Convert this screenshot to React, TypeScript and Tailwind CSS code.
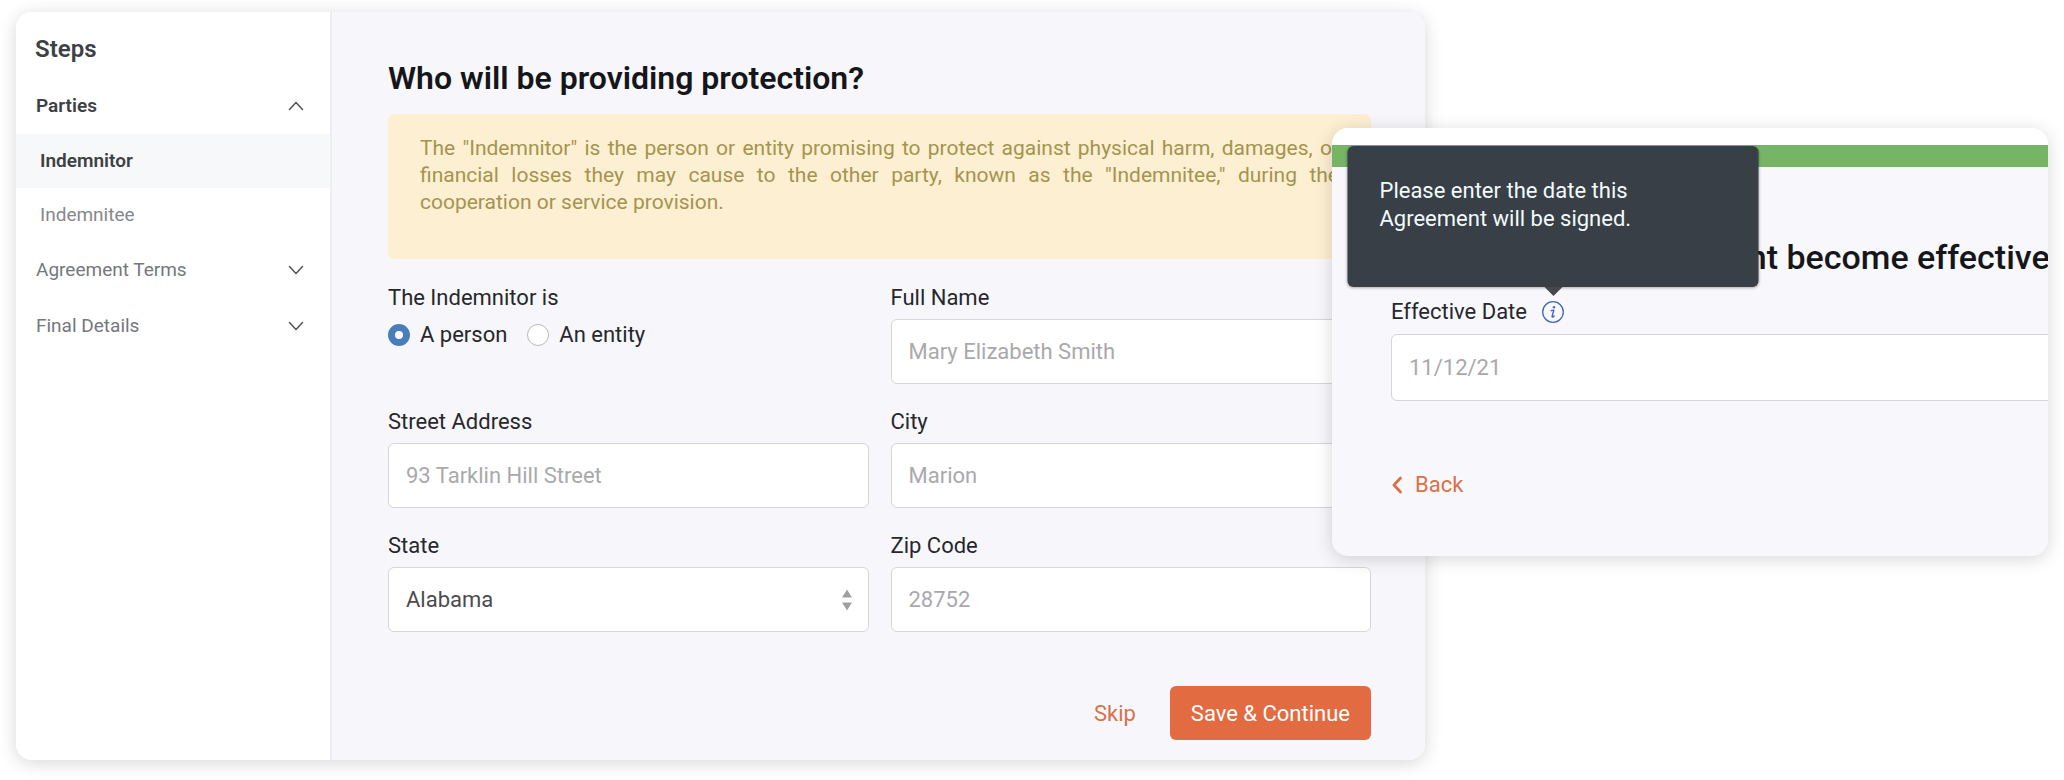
import React, { useState } from "react";

const card = "min-w-0 overflow-hidden rounded-2xl shadow-[0_3px_18px_rgba(0,0,0,0.16)]";
const labelText = "block text-[22px] leading-8 text-[#27272c]";
const control =
  "block w-full rounded-md border border-[#d5d5da] bg-white px-[17px] text-[22px] outline-none placeholder:text-[#a9a9ab] placeholder:opacity-100";

function Chevron({ up = false }: { up?: boolean }) {
  return (
    <svg
      viewBox="0 0 16 10"
      className="h-[10px] w-4"
      fill="none"
      stroke="#4a4e52"
      strokeWidth="1.4"
      strokeLinecap="round"
      strokeLinejoin="round"
      aria-hidden="true"
    >
      <path d={up ? "M1.5 8.5 8 1.5l6.5 7" : "M1.5 1.5 8 8.5l6.5-7"} />
    </svg>
  );
}

function Section({ title, open = false }: { title: string; open?: boolean }) {
  return (
    <button
      type="button"
      aria-expanded={open}
      className={
        open
          ? "flex h-14 w-full items-center justify-between pr-[26px] pl-5 text-left text-[19px] font-semibold text-[#3c4145]"
          : "flex h-14 w-full items-center justify-between pr-[26px] pl-5 text-left text-[19px] text-[#74787c]"
      }
    >
      {title}
      <Chevron up={open} />
    </button>
  );
}

function Sidebar() {
  return (
    <nav aria-label="Steps" className="w-[316px] shrink-0 border-r-2 border-[#eeeeef] bg-white pt-4">
      <h2 className="flex h-[42px] items-center pl-[19px] text-2xl font-semibold text-[#3c4145]">Steps</h2>
      <div className="pt-2">
        <Section title="Parties" open />
        <a
          href="#indemnitor"
          aria-current="step"
          className="flex h-[54px] items-center bg-[#f7f8f9] pl-6 text-[19px] font-semibold text-[#3c4145]"
        >
          Indemnitor
        </a>
        <a href="#indemnitee" className="flex h-[54px] items-center pl-6 text-[19px] text-[#85888b]">
          Indemnitee
        </a>
        <Section title="Agreement Terms" />
        <Section title="Final Details" />
      </div>
    </nav>
  );
}

function Field({ id, label, placeholder }: { id: string; label: string; placeholder: string }) {
  return (
    <div className="flex flex-col gap-[5px]">
      <label htmlFor={id} className={labelText}>
        {label}
      </label>
      <input id={id} type="text" placeholder={placeholder} className={control + " h-[65px]"} />
    </div>
  );
}

function Choice({ label, checked, onChange }: { label: string; checked: boolean; onChange: () => void }) {
  return (
    <label className="flex items-center gap-[10px] text-[22px] leading-8 text-[#27272c]">
      <input
        type="radio"
        name="party-type"
        checked={checked}
        onChange={onChange}
        className="size-[22px] appearance-none rounded-full border border-[#b9b9be] bg-white checked:border-[7px] checked:border-[#4a7ebb]"
      />
      {label}
    </label>
  );
}

function PartyForm() {
  const [kind, setKind] = useState("person");
  return (
    <main className="min-w-0 flex-1 bg-[#f7f7fb] pt-[46px] pr-[54px] pb-5 pl-14">
      <h1 className="text-[32px] leading-10 font-semibold text-[#15161a]">Who will be providing protection?</h1>
      <p className="mt-4 rounded-md bg-[#fdefd2] px-8 pt-[21px] pb-[43px] text-justify text-[21px] leading-[27px] text-[#a3954f]">
        The "Indemnitor" is the person or entity promising to protect against physical harm, damages, or financial
        losses they may cause to the other party, known as the "Indemnitee," during the cooperation or service
        provision.
      </p>
      <form onSubmit={(e) => e.preventDefault()}>
        <div className="mt-[23px] grid grid-cols-2 gap-[22px]">
          <fieldset>
            <legend className={labelText}>The Indemnitor is</legend>
            <div className="mt-[5px] flex gap-5">
              <Choice label="A person" checked={kind === "person"} onChange={() => setKind("person")} />
              <Choice label="An entity" checked={kind === "entity"} onChange={() => setKind("entity")} />
            </div>
          </fieldset>
          <Field id="full-name" label="Full Name" placeholder="Mary Elizabeth Smith" />
          <Field id="street" label="Street Address" placeholder="93 Tarklin Hill Street" />
          <Field id="city" label="City" placeholder="Marion" />
          <div className="flex flex-col gap-[5px]">
            <label htmlFor="state" className={labelText}>
              State
            </label>
            <div className="relative">
              <select
                id="state"
                defaultValue="Alabama"
                className={control + " h-[65px] appearance-none text-[#4b4b4e]"}
              >
                <option>Alabama</option>
                <option>Alaska</option>
                <option>Arizona</option>
              </select>
              <svg
                viewBox="0 0 10 21"
                className="pointer-events-none absolute top-1/2 right-[17px] h-[21px] w-[10px] -translate-y-1/2"
                fill="#a0a0a0"
                aria-hidden="true"
              >
                <path d="M5 0l5 8H0zM5 21l5-8H0z" />
              </svg>
            </div>
          </div>
          <Field id="zip" label="Zip Code" placeholder="28752" />
        </div>
        <div className="mt-[54px] flex items-center justify-end gap-[34px]">
          <button type="button" className="text-[22px] text-[#d9714a]">
            Skip
          </button>
          <button type="submit" className="h-[54px] rounded-md bg-[#e26b42] px-[21px] text-[22px] text-white">
            Save &amp; Continue
          </button>
        </div>
      </form>
    </main>
  );
}

function InfoIcon() {
  return (
    <svg viewBox="0 0 22 22" className="size-[22px]" fill="none" stroke="#4468b5" aria-hidden="true">
      <circle cx="11" cy="11" r="10.300" strokeWidth="1.300" />
      <circle cx="12" cy="6.300" r="1.200" fill="#4468b5" stroke="none" />
      <path
        d="M9.200 9.700c1-.5 1.900-.6 2.600-.5l-1.700 6c-.2.800.2 1 .7.800.6-.2 1-.6 1.400-1"
        strokeWidth="1.400"
        strokeLinecap="round"
        strokeLinejoin="round"
      />
    </svg>
  );
}

function DatePanel() {
  return (
    <section className={card + " mt-[116px] -ml-[93px] flex-[716] bg-[#f7f7fc]"}>
      <div className="h-[17px] bg-white" />
      <div className="h-[22px] bg-[#76b566]" />
      <div className="-mr-4 pt-[70px] pb-[55px] pl-[59px]">
        <h2 className="text-[34px] leading-10 font-medium whitespace-nowrap text-[#15161a]">
          When will this Agreement become effective?
        </h2>
        <div className="mt-[19px] flex items-center gap-[15px]">
          <label htmlFor="effective-date" className="text-[22px] leading-8 text-[#27272c]">
            Effective Date
          </label>
          <span className="relative flex">
            <button type="button" aria-label="About the effective date" aria-describedby="date-tip">
              <InfoIcon />
            </button>
            <span
              id="date-tip"
              role="tooltip"
              className="absolute bottom-full left-1/2 mb-[14px] w-[411px] -translate-x-1/2 rounded-md bg-[#383f47] pt-[31px] pr-24 pb-[54px] pl-8 text-[22px] leading-7 text-[#f3fafa] shadow-[0_1px_3px_rgba(0,0,0,0.3)]"
            >
              Please enter the date this Agreement will be signed.
              <svg
                viewBox="0 0 18 9"
                className="absolute top-full left-1/2 h-[9px] w-[18px] -translate-x-1/2"
                fill="#45494f"
                aria-hidden="true"
              >
                <path d="M0 0h18L9 9z" />
              </svg>
            </span>
          </span>
        </div>
        <input id="effective-date" type="text" placeholder="11/12/21" className={control + " mt-1.5 h-[67px]"} />
        <a href="#back" className="mt-[68px] flex w-max items-center gap-3 text-[22px] leading-8 text-[#d9714a]">
          <svg
            viewBox="0 0 12 18"
            className="h-[18px] w-3"
            fill="none"
            stroke="#dd6c44"
            strokeWidth="2.700"
            strokeLinecap="round"
            strokeLinejoin="round"
            aria-hidden="true"
          >
            <path d="M9.500 2 3 9l6.500 7" />
          </svg>
          Back
        </a>
      </div>
    </section>
  );
}

export default function App() {
  return (
    <div className="flex min-h-screen items-start overflow-hidden bg-white px-4 pt-3 pb-5 font-['Roboto','Liberation_Sans',sans-serif]">
      <div className={card + " flex flex-[1409]"}>
        <Sidebar />
        <PartyForm />
      </div>
      <DatePanel />
    </div>
  );
}
